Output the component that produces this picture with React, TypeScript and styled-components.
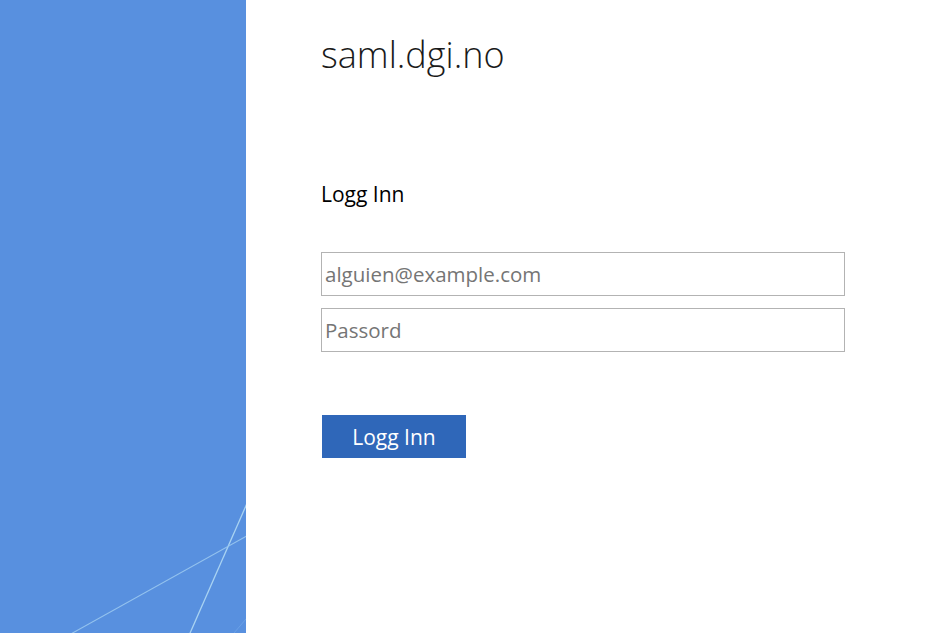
import React from "react";
import styled, { createGlobalStyle } from "styled-components";

const Global = createGlobalStyle`
  html, body { margin: 0; padding: 0; background: #fff; }
  body { font-family: "Open Sans", "Noto Sans", sans-serif; }
  * { box-sizing: border-box; }
`;

const Page = styled.div`
  display: flex;
  width: 934px;
  height: 633px;
  overflow: hidden;
`;

const Illustration = styled.div`
  position: relative;
  width: 246px;
  flex: 0 0 246px;
  height: 100%;
  background: #5890df;
`;

const Lines = styled.svg`
  position: absolute;
  inset: 0;
`;

const Content = styled.main`
  display: flex;
  flex-direction: column;
  padding: 30px 0 0 75px;
`;

const Title = styled.h1`
  margin: 0;
  font-family: "Open Sans", sans-serif;
  font-weight: 300;
  font-size: 36px;
  line-height: 50px;
  color: #1a1a1a;
`;

const Heading = styled.h2`
  margin: 100px 0 0 0;
  font-weight: 400;
  font-size: 21px;
  line-height: 28px;
  color: #000;
`;

const Form = styled.form`
  display: flex;
  flex-direction: column;
  gap: 12px;
  margin-top: 44px;
`;

const Input = styled.input`
  width: 524px;
  height: 44px;
  border: 1px solid #b3b3b3;
  padding: 0 3px;
  font-family: "Open Sans", sans-serif;
  font-size: 20.5px;
  color: #222;
  outline: none;
  &::placeholder { color: #757575; }
`;

const Button = styled.button`
  margin: 51px 0 0 1px;
  width: 144px;
  height: 43px;
  border: none;
  background: #2f67b9;
  color: #fff;
  font-family: "Open Sans", sans-serif;
  font-size: 21px;
  align-self: flex-start;
`;

export default function App() {
  return (
    <>
      <Global />
      <Page>
        <Illustration>
          <Lines width="246" height="633" viewBox="0 0 246 633">
            <line x1="252" y1="492" x2="187" y2="640" stroke="#a9d3f2" strokeWidth="1.3" />
            <line x1="252" y1="533" x2="60" y2="640" stroke="#93c2ee" strokeWidth="1.1" />
            <line x1="252" y1="612" x2="228" y2="640" stroke="#6aa0e6" strokeWidth="1" />
          </Lines>
        </Illustration>
        <Content>
          <Title>saml.dgi.no</Title>
          <Heading>Logg Inn</Heading>
          <Form onSubmit={(e) => e.preventDefault()}>
            <Input type="email" placeholder="alguien@example.com" />
            <Input type="password" placeholder="Passord" />
            <Button type="submit">Logg Inn</Button>
          </Form>
        </Content>
      </Page>
    </>
  );
}
